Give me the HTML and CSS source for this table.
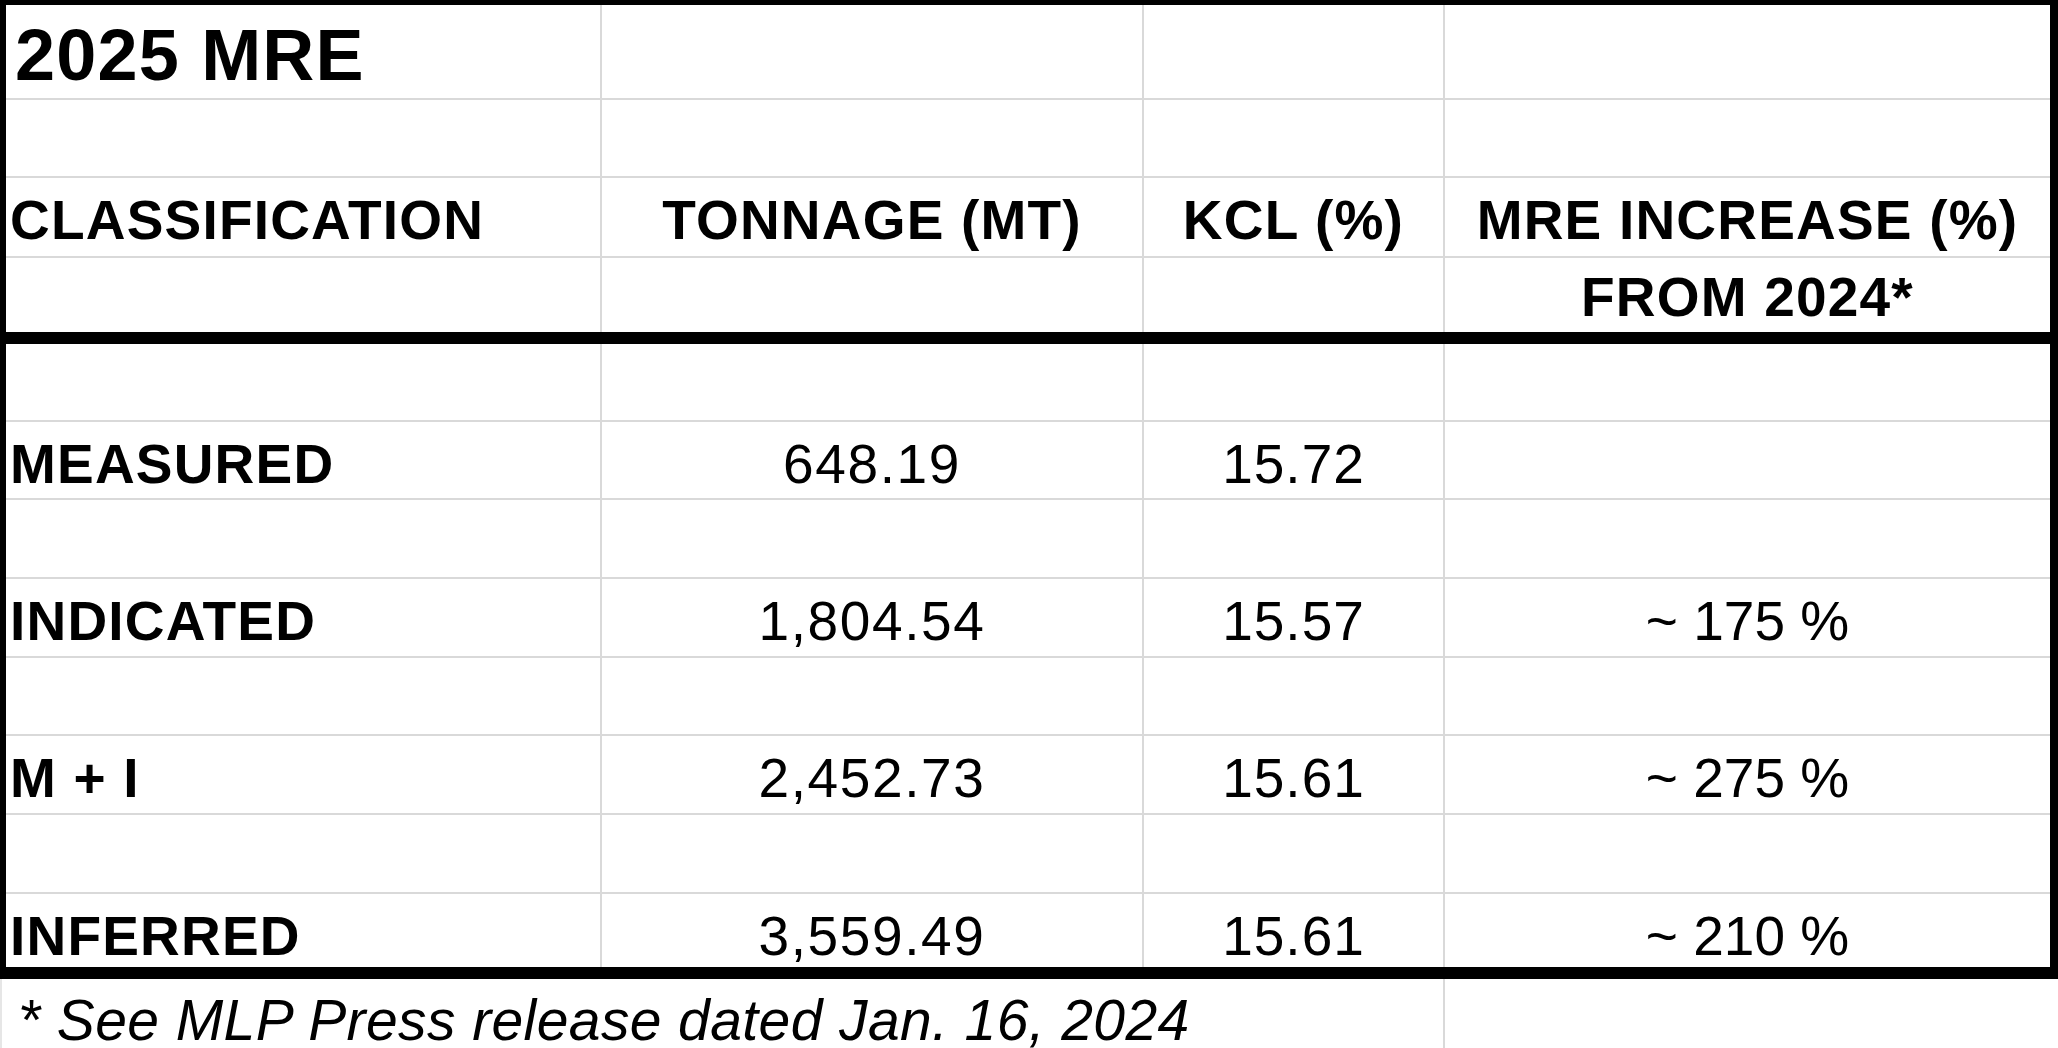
FILE: index.html
```html
<!DOCTYPE html>
<html lang="en">
<head>
<meta charset="utf-8">
<title>2025 MRE</title>
<link rel="stylesheet" href="styles.css">
</head>
<body>
<div class="sheet">
  <div class="grid head">
    <div class="c title">2025 MRE</div><div class="c"></div><div class="c"></div><div class="c"></div>
    <div class="c"></div><div class="c"></div><div class="c"></div><div class="c"></div>
    <div class="c b">CLASSIFICATION</div><div class="c b">TONNAGE (MT)</div><div class="c b">KCL (%)</div><div class="c b">MRE INCREASE (%)</div>
    <div class="c"></div><div class="c"></div><div class="c"></div><div class="c b up">FROM 2024*</div>
  </div>
  <div class="grid body">
    <div class="c"></div><div class="c"></div><div class="c"></div><div class="c"></div>
    <div class="c b">MEASURED</div><div class="c num">648.19</div><div class="c kcl">15.72</div><div class="c"></div>
    <div class="c"></div><div class="c"></div><div class="c"></div><div class="c"></div>
    <div class="c b">INDICATED</div><div class="c num">1,804.54</div><div class="c kcl">15.57</div><div class="c">~ 175 %</div>
    <div class="c"></div><div class="c"></div><div class="c"></div><div class="c"></div>
    <div class="c b">M + I</div><div class="c num">2,452.73</div><div class="c kcl">15.61</div><div class="c">~ 275 %</div>
    <div class="c"></div><div class="c"></div><div class="c"></div><div class="c"></div>
    <div class="c b">INFERRED</div><div class="c num">3,559.49</div><div class="c kcl">15.61</div><div class="c">~ 210 %</div>
  </div>
</div>
<div class="footer">
  <div class="note">* See MLP Press release dated Jan. 16, 2024</div>
  <div class="fcell"></div>
</div>
</body>
</html>
```
FILE: styles.css
```css
html, body {
  margin: 0;
  padding: 0;
  background: #ffffff;
}

body {
  width: 2058px;
  height: 1048px;
  overflow: hidden;
  font-family: "Liberation Sans", Arial, sans-serif;
  color: #000000;
}

.sheet {
  box-sizing: border-box;
  width: 2058px;
  border-top: 5px solid #000;
  border-left: 6px solid #000;
  border-right: 8px solid #000;
  border-bottom: 12px solid #000;
}

.grid {
  display: grid;
  grid-template-columns: 596px 542px 301px 605px;
}

.head {
  grid-template-rows: 95px 78px 80px 74px;
  border-bottom: 12px solid #000;
}

.body {
  grid-template-rows: 78px 78px 79px 79px 78px 79px 79px 73px;
}

.c {
  box-sizing: border-box;
  border-right: 2px solid #d9d9d9;
  border-bottom: 2px solid #d9d9d9;
  padding-top: 15px;
  font-size: 55px;
  line-height: 55px;
  text-align: center;
  white-space: nowrap;
}

.c:nth-child(4n) {
  border-right: none;
}

.c:nth-last-child(-n+4) {
  border-bottom: none;
}

.c:nth-child(4n+1) {
  text-align: left;
  padding-left: 4px;
}

.b {
  font-weight: bold;
  letter-spacing: 1.2px;
}

.num {
  letter-spacing: 1.6px;
}

.kcl {
  letter-spacing: 1px;
}

.up {
  padding-top: 12px;
}

.title {
  font-size: 72px;
  line-height: 72px;
  font-weight: bold;
  letter-spacing: 1.2px;
  padding-top: 14px;
  padding-left: 9px !important;
}

.footer {
  display: grid;
  grid-template-columns: 1445px 613px;
  height: 69px;
}

.note {
  box-sizing: border-box;
  border-left: 2px solid #e6e6e6;
  border-right: 2px solid #d9d9d9;
  padding-left: 16px;
  padding-top: 13px;
  font-size: 57px;
  line-height: 57px;
  font-style: italic;
  letter-spacing: 0.4px;
  white-space: nowrap;
}
```
